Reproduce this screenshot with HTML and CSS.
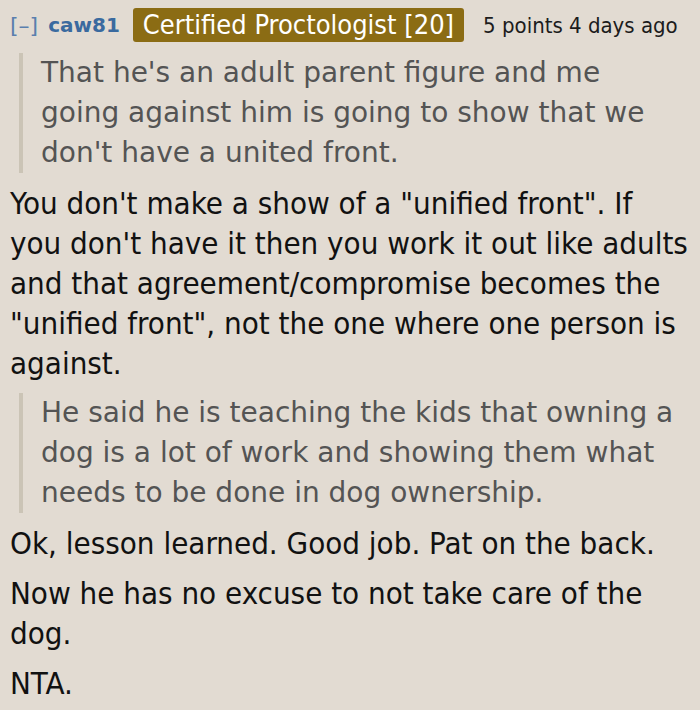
FILE: index.html
```html
<!DOCTYPE html>
<html>
<head>
<meta charset="utf-8">
<link rel="stylesheet" href="styles.css">
</head>
<body>
<div class="comment">
  <div class="tagline">
    <span class="expand">[–]</span>
    <span class="author">caw81</span>
    <span class="flair">Certified Proctologist [20]</span>
    <span class="meta">5 points 4 days ago</span>
  </div>
  <div class="md">
    <blockquote class="quote">That he's an adult parent figure and me going against him is going to show that we don't have a united front.</blockquote>
    <p class="para">You don't make a show of a "unified front". If you don't have it then you work it out like adults and that agreement/compromise becomes the "unified front", not the one where one person is against.</p>
    <blockquote class="quote">He said he is teaching the kids that owning a dog is a lot of work and showing them what needs to be done in dog ownership.</blockquote>
    <p class="para">Ok, lesson learned. Good job. Pat on the back.</p>
    <p class="para">Now he has no excuse to not take care of the dog.</p>
    <p class="para">NTA.</p>
  </div>
</div>
</body>
</html>
```

FILE: styles.css
```css
html, body {
  margin: 0;
  padding: 0;
  background: #e2dbd2;
}
body {
  font-family: "DejaVu Sans Condensed", "DejaVu Sans", sans-serif;
}
.comment {
  padding: 8px 9px 0 10px;
}
.tagline {
  display: flex;
  align-items: center;
  height: 34px;
  white-space: nowrap;
}
.expand {
  font-family: "DejaVu Sans", sans-serif;
  font-size: 22px;
  color: #5a7fae;
  margin-right: 10px;
}
.author {
  font-family: "DejaVu Sans", sans-serif;
  font-weight: bold;
  font-size: 20px;
  color: #3a6a9f;
  margin-right: 13px;
}
.flair {
  background: #8b6c14;
  color: #ffffff;
  font-size: 27px;
  line-height: 34px;
  padding: 0 10px;
  border-radius: 3px;
}
.meta {
  font-size: 22px;
  color: #1c1c1c;
  margin-left: 19px;
}
.md {
  display: flex;
  flex-direction: column;
  gap: 10px;
  padding-top: 11px;
}
.quote {
  margin: 0 10px 0 9px;
  padding: 0 0 0 18px;
  border-left: 4px solid #cbc4b6;
  font-family: "DejaVu Sans", sans-serif;
  font-size: 28px;
  line-height: 40px;
  color: #545454;
}
.para {
  margin: 0;
  font-size: 31px;
  line-height: 40px;
  color: #111111;
}
```
